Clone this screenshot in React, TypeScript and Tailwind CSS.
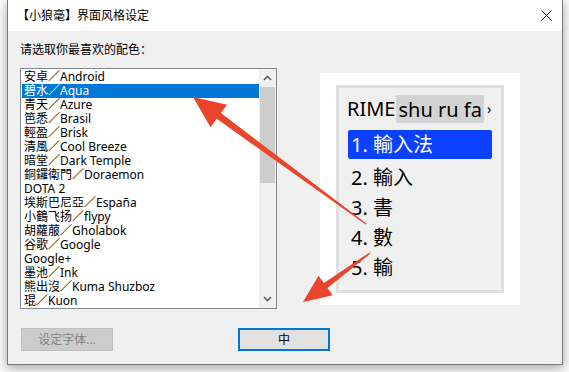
import React from "react";

const items = [
  "安卓／Android",
  "碧水／Aqua",
  "青天／Azure",
  "笆悉／Brasil",
  "輕盈／Brisk",
  "清風／Cool Breeze",
  "暗堂／Dark Temple",
  "銅鑼衛門／Doraemon",
  "DOTA 2",
  "埃斯巴尼亞／España",
  "小鶴飞扬／flypy",
  "胡蘿菔／Gholabok",
  "谷歌／Google",
  "Google+",
  "墨池／Ink",
  "熊出沒／Kuma Shuzboz",
  "琨／Kuon",
];

type P = [number, number];
function arrow(t: P, p: P, L: number, W: number, w1: number, w0: number) {
  const dx = p[0] - t[0];
  const dy = p[1] - t[1];
  const len = Math.hypot(dx, dy);
  const d = [dx / len, dy / len];
  const n = [-d[1], d[0]];
  const b = [p[0] - d[0] * L, p[1] - d[1] * L];
  const pts: number[][] = [
    [t[0] + (n[0] * w0) / 2, t[1] + (n[1] * w0) / 2],
    [b[0] + (n[0] * w1) / 2, b[1] + (n[1] * w1) / 2],
    [b[0] + n[0] * W, b[1] + n[1] * W],
    [p[0], p[1]],
    [b[0] - n[0] * W, b[1] - n[1] * W],
    [b[0] - (n[0] * w1) / 2, b[1] - (n[1] * w1) / 2],
    [t[0] - (n[0] * w0) / 2, t[1] - (n[1] * w0) / 2],
  ];
  return pts.map((q) => q[0].toFixed(1) + "," + q[1].toFixed(1)).join(" ");
}

const font = { fontFamily: '"Noto Sans", "Noto Sans CJK SC", sans-serif' };

export default function App() {
  return (
    <div
      className="relative w-[569px] h-[372px] overflow-hidden bg-[#fafafa]"
      style={font}
    >
      <div className="ml-[7px] w-[556px] h-[365px] flex flex-col border-x border-b border-[#7a7a7a] shadow-[0_3px_10px_rgba(0,0,0,0.35)]">
        {/* title bar */}
        <div className="h-[31px] bg-white flex items-center justify-between pl-[9px] pr-[10px] text-[12px] text-black">
          <span className="leading-[16px]">【小狼毫】界面风格设定</span>
          <svg width="11" height="11" viewBox="0 0 11 11">
            <path d="M0.5 0.5 L10.5 10.5 M10.5 0.5 L0.5 10.5" stroke="#000" strokeWidth="1" />
          </svg>
        </div>
        {/* body */}
        <div className="flex-1 bg-[#f0f0f0] flex flex-col">
          <div className="flex pl-[12px]">
            <div className="w-[257px] flex flex-col">
              <div className="mt-[11px] h-[16px] leading-[16px] text-[12px] text-black">
                请选取你最喜欢的配色：
              </div>
              <div className="mt-[10px] h-[241px] border border-[#828790] bg-white flex overflow-hidden">
                <div className="flex-1 pt-[1px] pl-[1px]">
                  {items.map((it, i) => (
                    <div
                      key={it}
                      className={
                        "h-[14px] leading-[14px] text-[12px] pl-[2px] whitespace-nowrap " +
                        (i === 1 ? "bg-[#0078d7] text-white" : "text-black")
                      }
                    >
                      {it}
                    </div>
                  ))}
                </div>
                <div className="w-[17px] bg-[#f0f0f0] flex flex-col items-center">
                  <div className="h-[18px] w-full flex items-center justify-center">
                    <svg width="9" height="6" viewBox="0 0 9 6">
                      <path d="M1 5 L4.5 1.5 L8 5" stroke="#606060" strokeWidth="1.6" fill="none" />
                    </svg>
                  </div>
                  <div className="w-[15px] h-[96px] bg-[#cdcdcd]" />
                  <div className="flex-1" />
                  <div className="h-[18px] w-full flex items-center justify-center">
                    <svg width="9" height="6" viewBox="0 0 9 6">
                      <path d="M1 1 L4.5 4.5 L8 1" stroke="#606060" strokeWidth="1.6" fill="none" />
                    </svg>
                  </div>
                </div>
              </div>
            </div>
            <div className="ml-[43px] mt-[42px] w-[200px] h-[232px] bg-white px-[16px] py-[12px]">
              <div className="w-full h-full border-[3px] border-[#dedede] bg-[#f0f0f0] flex flex-col pt-[7px]">
                <div className="h-[28px] flex items-center pl-[8px] text-[20px] text-black leading-[30px] whitespace-nowrap">
                  <span>RIME</span>
                  <span className="ml-[1px] bg-[#d3d3d3] rounded-[2px] px-[2px] h-[28px] leading-[30px]">shu ru fa</span>
                  <span className="ml-[3px] text-[14px]">›</span>
                </div>
                <div className="mt-[7px] ml-[9px] w-[144px] h-[29px] bg-[#0c40ff] rounded-[2px] text-white text-[20px] leading-[30px] pl-[3px] whitespace-nowrap">
                  1. 輸入法
                </div>
                {["2. 輸入", "3. 書", "4. 數", "5. 輸"].map((c, i) => (
                  <div
                    key={c}
                    className={
                      "ml-[9px] h-[30px] leading-[30px] text-[20px] text-black pl-[3px] whitespace-nowrap " +
                      (i === 0 ? "mt-[4px]" : "")
                    }
                  >
                    {c}
                  </div>
                ))}
              </div>
            </div>
          </div>
          <div className="relative flex mt-[19px] pl-[13px] h-[23px]">
            <div className="w-[92px] h-[23px] border border-[#bfbfbf] bg-[#cccccc] flex items-center justify-center text-[12px] text-[#838383]">
              设定字体...
            </div>
            <div className="ml-[125px] w-[92px] h-[23px] border-2 border-[#0078d7] bg-[#e1e1e1] flex items-center justify-center text-[12px] text-black">
              中
            </div>
          </div>
        </div>
      </div>
      <svg
        className="absolute inset-0 pointer-events-none"
        width="569"
        height="372"
        viewBox="0 0 569 372"
      >
        <polygon points={arrow([366, 224], [193, 97], 32, 14, 7, 1.5)} fill="#e8452c" />
        <polygon points={arrow([370, 253], [303, 302], 28, 12, 6, 1.5)} fill="#e8452c" />
      </svg>
    </div>
  );
}
